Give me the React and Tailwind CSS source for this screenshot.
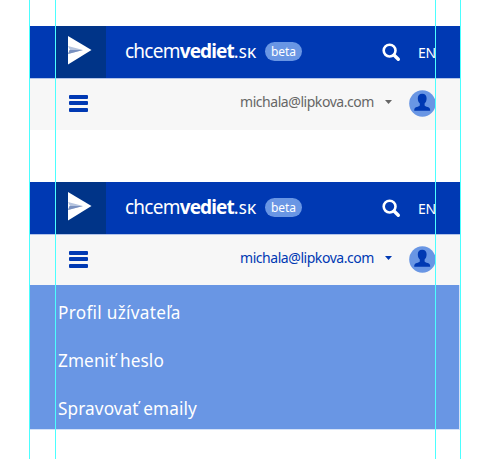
import React from 'react';

const Logo = () => (
  <svg width="50" height="52" viewBox="0 0 50 52" className="block">
    <path d="M12 10L35.5 24L12 38.5z" fill="#fff" />
    <path d="M12 20L27 24L12 28L14 24z" fill="#b5c4de" />
    <path d="M13.5 24H27L12 28z" fill="#7890bf" />
  </svg>
);

const SearchIcon = () => (
  <svg width="19" height="19" viewBox="0 0 19 19" className="block" fill="none" stroke="#fff">
    <circle cx="7.6" cy="7.6" r="5.9" strokeWidth="2.6" />
    <path d="M12.2 12.2L16.3 16.3" strokeWidth="3.4" strokeLinecap="round" />
  </svg>
);

const Avatar = () => (
  <svg width="27" height="27" viewBox="0 0 27 27" className="block">
    <circle cx="13.4" cy="13.5" r="13.2" fill="#6996e4" />
    <path
      d="M13.2 3.8c-2.9 0-4.4 1.900-4.400 4.500 0 2.500.8 4.200 2 5.200v1.700c-.3 1-1.500 1.300-3.100 1.900-1.900.7-2.500 1.400-2.500 3.700h16c0-2.300-.6-3-2.500-3.700-1.600-.6-2.800-.9-3.100-1.900v-1.700c1.200-1 2-2.700 2-5.200 0-2.600-1.500-4.500-4.400-4.500z"
      fill="#0039b3"
    />
  </svg>
);

const Header = ({ active }) => (
  <div>
    <div className="flex h-[52px] bg-[#0039b3] pl-[26px] text-white">
      <div className="w-[50px] bg-[#003488]"><Logo /></div>
      <div className="ml-[19px] flex w-[140px] items-baseline pt-[12px] text-[19px] leading-[26px]">
        <span className="tracking-[-0.75px]">chcem</span>
        <span className="font-bold tracking-[-0.9px]">vediet</span>
        <span className="text-[18px]">.</span>
        <span className="text-[14.5px] font-medium tracking-[0.3px]">SK</span>
      </div>
      <div className="mt-[16px] h-[19px] w-[37px] rounded-full bg-[#6996e4] text-center text-[12px] leading-[20px]">beta</div>
      <div className="ml-[80px] mt-[17px]"><SearchIcon /></div>
      <div className="ml-[17px] pt-[17px] text-[14px] leading-[20px] tracking-[-0.3px]">EN</div>
    </div>
    <div className={`flex border-t border-[#b3c4e9] bg-[#f7f7f7] pl-[39px] ${active ? 'h-[51px] text-[#0039b3]' : 'h-[52px] text-[#666666]'}`}>
      <div className="mt-[16px] flex w-[19px] flex-col gap-[2.4px]">
        <div className="h-[4px] rounded-[1px] bg-[#0039b3]" />
        <div className="h-[4px] rounded-[1px] bg-[#0039b3]" />
        <div className="h-[4px] rounded-[1px] bg-[#0039b3]" />
      </div>
      <div className="ml-[152px] w-[145px] pt-[13px] text-[14px] leading-[20px] tracking-[-0.45px]">michala@lipkova.com</div>
      <svg width="7" height="4" viewBox="0 0 7 4" className="mt-[21px]"><path d="M0 0H7L3.500 4z" fill="currentColor" /></svg>
      <div className="ml-[17px] mt-[11px]"><Avatar /></div>
    </div>
  </div>
);

const Guides = () => (
  <div className="pointer-events-none absolute inset-0">
    <div className="absolute inset-y-0 left-[29px] w-px bg-[#4bffff]" />
    <div className="absolute inset-y-0 left-[55px] w-px bg-[#4bffff]" />
    <div className="absolute inset-y-0 left-[435px] w-px bg-[#4bffff]" />
    <div className="absolute inset-y-0 left-[460px] w-px bg-[#4bffff]" />
  </div>
);

export default function App() {
  return (
    <div className="relative h-[459px] w-[492px] overflow-hidden bg-white pl-[30px] pt-[26px] font-['Noto_Sans',sans-serif]">
      <div className="w-[430px]">
        <Header />
        <div className="h-[52px]" />
        <Header active />
        <nav className="h-[145px] w-[430px] border-b border-r border-[#d5e2f8] bg-[#6996e4] pl-[28px] pt-[4px] text-[17.2px] leading-[48px] text-white">
          <div className="tracking-[0.28px]">Profil užívateľa</div>
          <div className="tracking-[0.1px]">Zmeniť heslo</div>
          <div className="tracking-[0.1px]">Spravovať emaily</div>
        </nav>
      </div>
      <Guides />
    </div>
  );
}
